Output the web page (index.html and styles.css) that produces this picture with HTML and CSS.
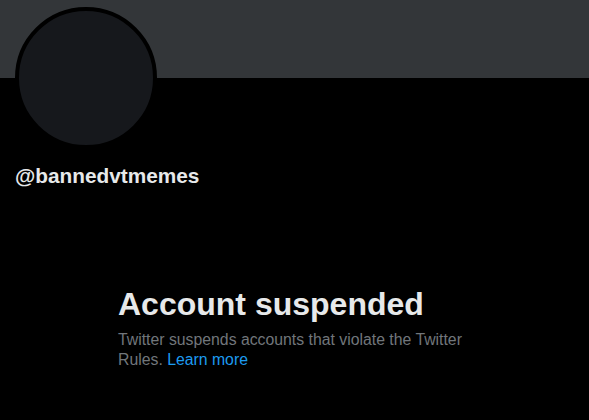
FILE: index.html
```html
<!DOCTYPE html>
<html lang="en">
<head>
<meta charset="utf-8">
<title>@bannedvtmemes</title>
<link rel="stylesheet" href="styles.css">
</head>
<body>
<div class="profile">
  <div class="banner"></div>
  <div class="head">
    <div class="avatar"></div>
    <div class="handle">@bannedvtmemes</div>
  </div>
  <div class="empty">
    <h1 class="title">Account suspended</h1>
    <p class="desc">Twitter suspends accounts that violate the Twitter Rules. <a class="link" href="#">Learn more</a></p>
  </div>
</div>
</body>
</html>
```
FILE: styles.css
```css
html, body {
  margin: 0;
  padding: 0;
  background: #000;
}
body {
  font-family: "Liberation Sans", Arial, sans-serif;
  color: #e7e9ea;
  width: 589px;
  height: 420px;
  overflow: hidden;
}
.banner {
  height: 78px;
  background: #333639;
}
.head {
  padding: 0 15px;
}
.avatar {
  width: 134px;
  height: 134px;
  border: 4px solid #000;
  border-radius: 50%;
  background: #16181c;
  margin-top: -71px;
}
.handle {
  margin-top: 15px;
  font-size: 20.8px;
  font-weight: 700;
  line-height: 24px;
  color: #e7e9ea;
}
.empty {
  margin: 98px 0 0 118px;
  width: 356px;
}
.title {
  margin: 0;
  font-size: 32px;
  font-weight: 800;
  line-height: 36px;
  color: #e7e9ea;
}
.desc {
  margin: 8px 0 0;
  font-size: 15.8px;
  line-height: 20px;
  color: #71767b;
}
.link {
  color: #1d9bf0;
  text-decoration: none;
}
```
